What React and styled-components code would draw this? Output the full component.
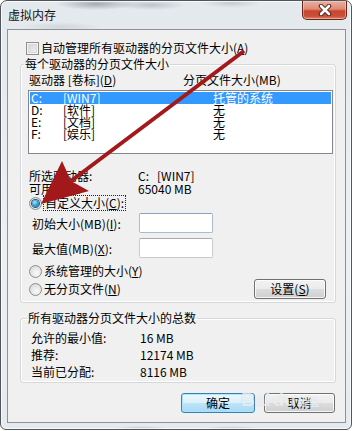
import React from "react";
import styled, { createGlobalStyle, css } from "styled-components";

const Global = createGlobalStyle`
  html, body {
    margin: 0;
    background: #ffffff;
  }
  body {
    font-family: "Noto Sans CJK SC", "Liberation Sans", sans-serif;
    font-size: 12px;
    color: #000;
  }
`;

const Window = styled.div`
  position: relative;
  box-sizing: border-box;
  width: 352px;
  height: 430px;
  border: 1px solid #50565e;
  border-radius: 7px 7px 6px 6px;
  padding: 0 5px 6px 6px;
  display: flex;
  flex-direction: column;
  background:
    radial-gradient(ellipse 40px 6px at 95px 3px, rgba(90, 95, 105, 0.45), transparent),
    radial-gradient(ellipse 35px 5px at 150px 4px, rgba(120, 125, 135, 0.35), transparent),
    radial-gradient(ellipse 30px 5px at 230px 2px, rgba(130, 135, 140, 0.3), transparent),
    radial-gradient(ellipse 40px 5px at 60px 26px, rgba(150, 155, 160, 0.25), transparent),
    radial-gradient(ellipse 30px 3px at 140px 428px, rgba(120, 125, 130, 0.4), transparent),
    radial-gradient(ellipse 30px 3px at 230px 428px, rgba(120, 125, 130, 0.35), transparent),
    linear-gradient(#e4e9ee, #edf0f3 60%, #e6eaee);
  box-shadow: inset 0 0 0 1px rgba(255, 255, 255, 0.7);
`;

const TitleBar = styled.div`
  height: 28px;
  display: flex;
  justify-content: space-between;
  align-items: flex-start;
`;

const Title = styled.span`
  margin: 7px 0 0 1px;
  font-size: 12px;
  line-height: 14px;
  color: #111;
`;

const CloseButton = styled.div`
  box-sizing: border-box;
  width: 45px;
  height: 19px;
  margin-right: -1px;
  border: 1px solid #6a2519;
  border-top: none;
  border-radius: 0 0 5px 5px;
  display: flex;
  align-items: center;
  justify-content: center;
  background: linear-gradient(#eab0a2, #e08a73 45%, #c9452c 55%, #c7513a 85%, #de8a6a);
  box-shadow: inset 0 0 0 1px rgba(255, 220, 210, 0.45);
`;

const Client = styled.div`
  flex: 1;
  border: 1px solid #8c9299;
  background: #f0f0f0;
  display: flex;
  flex-direction: column;
`;

const CheckRow = styled.label`
  display: flex;
  align-items: center;
  gap: 2px;
  margin: 11px 0 0 18px;
  height: 14px;
  line-height: 14px;
`;

const CheckBox = styled.span`
  box-sizing: border-box;
  width: 13px;
  height: 13px;
  border: 1px solid #8f8f8f;
  background: linear-gradient(135deg, #d2d2d2, #f4f4f4);
  box-shadow: inset 0 0 0 1px #f6f6f6, inset 0 0 0 2px #d8d8d8;
`;

const Group = styled.fieldset`
  box-sizing: border-box;
  margin: ${({ $top }) => $top}px 0 0 12px;
  width: ${({ $width }) => $width}px;
  padding: 0 ${({ $right }) => $right}px ${({ $bottom }) => $bottom}px 8px;
  border: 1px solid #d5d8db;
  border-radius: 3px;
  box-shadow: inset 0 0 0 1px #ffffff;
  min-width: 0;
`;

const Legend = styled.legend`
  padding: 0 1px;
  margin-left: ${({ $shift }) => $shift}px;
  line-height: 14px;
  height: 14px;
`;

const HeaderRow = styled.div`
  display: grid;
  grid-template-columns: 154px 1fr;
  margin-top: 2px;
  height: 14px;
  line-height: 14px;
`;

const ListBox = styled.div`
  box-sizing: border-box;
  margin: 3px 0 0 -1px;
  width: 305px;
  height: 64px;
  border: 1px solid #828790;
  background: #fff;
  padding: 1px;
`;

const ListRow = styled.div`
  display: grid;
  grid-template-columns: 32px 150px 1fr;
  height: 12px;
  line-height: 12px;
  padding-left: 1px;
  white-space: pre;
  ${({ $selected }) =>
    $selected &&
    css`
      background: #3399ff;
      color: #fff;
    `}
`;

const InfoGrid = styled.div`
  display: grid;
  grid-template-columns: 109px 1fr;
  grid-auto-rows: 13px;
  line-height: 13px;
  margin-top: 15px;
  white-space: pre;
`;

const RadioRow = styled.div`
  display: flex;
  align-items: center;
  gap: 2px;
  height: 14px;
  line-height: 14px;
  margin-top: ${({ $top }) => $top}px;
`;

const Radio = styled.span`
  position: relative;
  box-sizing: border-box;
  width: 13px;
  height: 13px;
  border-radius: 50%;
  border: 1px solid #8d8d8d;
  background: radial-gradient(circle at 60% 65%, #fafafa, #e2e2e2 60%, #cfcfcf);
  display: flex;
  align-items: center;
  justify-content: center;
  ${({ $checked }) =>
    $checked &&
    css`
      &::after {
        content: "";
        width: 7px;
        height: 7px;
        border-radius: 50%;
        background: radial-gradient(circle at 40% 35%, #a6ecff, #3aa3d6 45%, #134f82 100%);
        box-shadow: 0 0 0 1px #215d7e;
      }
    `}
`;

const FocusLabel = styled.span`
  outline: 1px dotted #222;
  outline-offset: 0;
  padding: 0 1px;
`;

const FieldRow = styled.div`
  display: grid;
  grid-template-columns: 107px 74px;
  align-items: center;
  margin: ${({ $top }) => $top}px 0 0 3px;
`;

const TextInput = styled.div`
  box-sizing: border-box;
  height: 20px;
  background: #fff;
  border: 1px solid ${({ $focused }) => ($focused ? "#a9bbd4" : "#c9cccf")};
  border-top-color: ${({ $focused }) => ($focused ? "#8aa0c0" : "#a7abb0")};
  border-radius: 2px;
`;

const SplitRow = styled.div`
  display: flex;
  align-items: center;
  justify-content: space-between;
  margin-top: 1px;
`;

const Button = styled.div`
  box-sizing: border-box;
  width: ${({ $w }) => $w}px;
  height: 20px;
  border: 1px solid ${({ $default }) => ($default ? "#3c7fb1" : "#707070")};
  border-radius: 3px;
  display: flex;
  align-items: center;
  justify-content: center;
  line-height: 14px;
  background: ${({ $default }) =>
    $default
      ? "linear-gradient(#ecf7fd, #dcf0fb 50%, #bfe4f8 51%, #a9d9f3)"
      : "linear-gradient(#f2f2f2, #ebebeb 50%, #dddddd 51%, #cfcfcf)"};
  box-shadow: inset 0 0 0 1px
    ${({ $default }) => ($default ? "rgba(160,230,255,0.9)" : "rgba(255,255,255,0.8)")};
`;

const TotalGrid = styled.div`
  display: grid;
  grid-template-columns: 109px 1fr;
  grid-auto-rows: 17px;
  line-height: 17px;
  margin: 4px 0 0 2px;
`;

const ButtonBar = styled.div`
  display: flex;
  justify-content: flex-end;
  gap: 9px;
  margin-top: 10px;
  padding-right: 10px;
`;

const Overlay = styled.svg`
  position: absolute;
  left: 0;
  top: 0;
  pointer-events: none;
`;

const Watermark = styled.div`
  position: absolute;
  left: 240px;
  top: 388px;
  display: flex;
  align-items: baseline;
  gap: 2px;
  font-family: "Liberation Sans", sans-serif;
  font-weight: bold;
  font-size: 19px;
  color: rgba(255, 255, 255, 0.6);
  text-shadow: 0 0 1px rgba(170, 185, 200, 0.5);
  pointer-events: none;
`;

const drives = [
  { letter: "C:", label: "[WIN7]", size: "托管的系统", selected: true },
  { letter: "D:", label: "[软件]", size: "无" },
  { letter: "E:", label: "[文档]", size: "无" },
  { letter: "F:", label: "[娱乐]", size: "无" },
];

function App() {
  return (
    <>
      <Global />
      <Window>
        <TitleBar>
          <Title>虚拟内存</Title>
          <CloseButton>
            <svg width="14" height="12" viewBox="0 0 14 12">
              <path d="M3 2 L11 10 M11 2 L3 10" stroke="#4a1a12" strokeWidth="4.5" strokeLinecap="round" />
              <path d="M3 2 L11 10 M11 2 L3 10" stroke="#ffffff" strokeWidth="2.6" strokeLinecap="round" />
            </svg>
          </CloseButton>
        </TitleBar>
        <Client>
          <CheckRow>
            <CheckBox />
            <span>
              自动管理所有驱动器的分页文件大小(<u>A</u>)
            </span>
          </CheckRow>

          <Group $top={2} $width={316} $right={9} $bottom={3}>
            <Legend $shift={-5}>每个驱动器的分页文件大小</Legend>
            <HeaderRow>
              <span>
                驱动器 [卷标](<u>D</u>)
              </span>
              <span>分页文件大小(MB)</span>
            </HeaderRow>
            <ListBox>
              {drives.map((d) => (
                <ListRow key={d.letter} $selected={d.selected}>
                  <span>{d.letter}</span>
                  <span>{d.label}</span>
                  <span>{d.size}</span>
                </ListRow>
              ))}
            </ListBox>
            <InfoGrid>
              <span>所选驱动器:</span>
              <span>C:   [WIN7]</span>
              <span>可用空间:</span>
              <span>65040 MB</span>
            </InfoGrid>
            <RadioRow $top={1}>
              <Radio $checked />
              <FocusLabel>
                自定义大小(<u>C</u>):
              </FocusLabel>
            </RadioRow>
            <FieldRow $top={3}>
              <span>
                初始大小(MB)(<u>I</u>):
              </span>
              <TextInput $focused />
            </FieldRow>
            <FieldRow $top={5}>
              <span>
                最大值(MB)(<u>X</u>):
              </span>
              <TextInput />
            </FieldRow>
            <RadioRow $top={6}>
              <Radio />
              <span>
                系统管理的大小(<u>Y</u>)
              </span>
            </RadioRow>
            <SplitRow>
              <RadioRow $top={0}>
                <Radio />
                <span>
                  无分页文件(<u>N</u>)
                </span>
              </RadioRow>
              <Button $w={72}>
                设置(<u>S</u>)
              </Button>
            </SplitRow>
          </Group>

          <Group $top={8} $width={316} $right={8} $bottom={2}>
            <Legend $shift={-2}>所有驱动器分页文件大小的总数</Legend>
            <TotalGrid>
              <span>允许的最小值:</span>
              <span>16 MB</span>
              <span>推荐:</span>
              <span>12174 MB</span>
              <span>当前已分配:</span>
              <span>8116 MB</span>
            </TotalGrid>
          </Group>

          <ButtonBar>
            <Button $w={74} $default>
              确定
            </Button>
            <Button $w={71}>取消</Button>
          </ButtonBar>
        </Client>

        <Watermark>
          <span>Bai</span>
          <span>du</span>
          <span style={{ fontSize: 11 }}>经验</span>
        </Watermark>

        <Overlay width="352" height="430" viewBox="0 0 352 430">
          <line x1="243" y1="50" x2="70" y2="180" stroke="#a3191b" strokeWidth="4" />
          <path d="M40 203 L61 160 L70 180 L88 190 Z" fill="#a3191b" />
        </Overlay>
      </Window>
    </>
  );
}

export default App;
